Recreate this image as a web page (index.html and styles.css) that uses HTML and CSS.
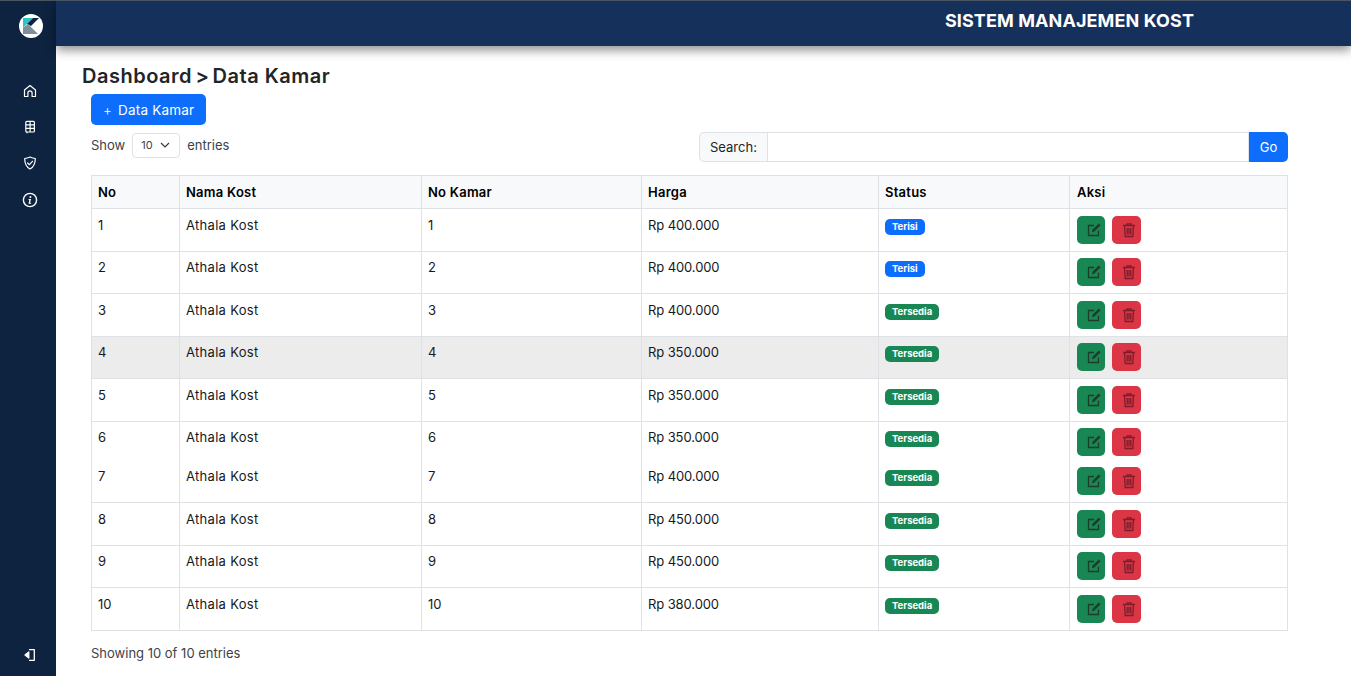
FILE: index.html
```html
<!DOCTYPE html>
<html>
  <head>
    <meta charset="utf-8">
    <title>Data Kamar</title>
    <link rel="stylesheet" href="styles.css">
  </head>
  <body>
    <aside class="sidebar">
      <div class="logo">
        <svg width="26" height="26" viewBox="0 0 26 26">
          <circle cx="13" cy="13" r="12" fill="#fff"/>
          <polygon points="5,5 15,5 5,15" fill="#2cc4c9"/>
          <polygon points="15,5 21,5 13,13 9,11" fill="#0d2340"/>
          <polygon points="5,21 5,15 10,11 20,21" fill="#7d8f9c"/>
        </svg>
      </div>
      <nav class="side-nav">
        <a class="side-link" href="#">
          <svg width="16" height="16" viewBox="0 0 16 16" fill="none" stroke="#fff" stroke-width="1.2" stroke-linejoin="round"><path d="M2.5 7 8 2.5 13.500 7v6.500h-3.400V10a2.100 2.100 0 0 0-4.200 0v3.500H2.500z"/></svg>
        </a>
        <a class="side-link" href="#">
          <svg width="16" height="16" viewBox="0 0 16 16" fill="none" stroke="#fff" stroke-width="1.200"><rect x="3.800" y="2.400" width="8.600" height="10.600" rx="1"/><path d="M8.100 2.400v10.600M3.800 5.900h8.600M3.800 9.400h8.600M5 13v1.200"/></svg>
        </a>
        <a class="side-link" href="#">
          <svg width="16" height="16" viewBox="0 0 16 16" fill="none" stroke="#fff" stroke-width="1.200" stroke-linejoin="round" stroke-linecap="round"><path d="M8 2c2 1 3.600 1.400 5.300 1.500 0 4.600-1.400 8.400-5.300 10.500C4.100 11.900 2.700 8.100 2.700 3.500 4.400 3.400 6 3 8 2z"/><path d="M5.600 8 7.400 9.700 10.500 6.300"/></svg>
        </a>
        <a class="side-link side-link-big" href="#">
          <svg width="16" height="16" viewBox="0 0 16 16"><circle cx="8" cy="8" r="6.600" fill="none" stroke="#fff" stroke-width="1.400"/><circle cx="8.400" cy="4.900" r="1" fill="#fff"/><path d="M6.700 7h2.300l-.9 3.800h1v.9H6.500l.8-3.800h-.8z" fill="#fff"/></svg>
        </a>
      </nav>
      <a class="side-link logout" href="#">
        <svg width="16" height="16" viewBox="0 0 16 16" fill="none" stroke="#fff" stroke-width="1.300" stroke-linejoin="round"><path d="M7 2.700h5.300v10.600H7"/><path d="M6.800 5v6L3 8z" fill="#fff"/></svg>
      </a>
    </aside>

    <div class="main">
      <header class="topbar">
        <h1 class="app-title">SISTEM MANAJEMEN KOST</h1>
      </header>

      <section class="content">
        <h2 class="crumb">Dashboard <span class="crumb-sep">&gt;</span> Data Kamar</h2>
        <div class="panel">
          <a class="btn-add" href="#"><span class="plus">+</span> Data Kamar</a>

          <div class="tools">
            <div class="show">
              <span>Show</span>
              <div class="select">10
                <svg width="12" height="12" viewBox="0 0 12 12" fill="none" stroke="#343a40" stroke-width="1.200"><path d="M2 4l4 4 4-4"/></svg>
              </div>
              <span>entries</span>
            </div>
            <form class="search">
              <label class="search-label">Search:</label>
              <input class="search-input" type="text">
              <button class="search-btn" type="button">Go</button>
            </form>
          </div>

          <table class="rooms">
            <colgroup>
              <col class="c-no"><col class="c-nama"><col class="c-kamar"><col class="c-harga"><col class="c-status"><col class="c-aksi">
            </colgroup>
            <thead>
              <tr><th>No</th><th>Nama Kost</th><th>No Kamar</th><th>Harga</th><th>Status</th><th class="aksi">Aksi</th></tr>
            </thead>
            <tbody id="rows"></tbody>
          </table>

          <p class="info">Showing 10 of 10 entries</p>
        </div>
      </section>
    </div>

    <script>
      var data = [
        [1, "Rp 400.000", "Terisi"],
        [2, "Rp 400.000", "Terisi"],
        [3, "Rp 400.000", "Tersedia"],
        [4, "Rp 350.000", "Tersedia"],
        [5, "Rp 350.000", "Tersedia"],
        [6, "Rp 350.000", "Tersedia"],
        [7, "Rp 400.000", "Tersedia"],
        [8, "Rp 450.000", "Tersedia"],
        [9, "Rp 450.000", "Tersedia"],
        [10, "Rp 380.000", "Tersedia"]
      ];
      var editIcon = '<svg width="16" height="16" viewBox="0 0 16 16" fill="none" stroke="#1c3d2c" stroke-width="1.300"><path d="M12.500 8.500V13.500H2.500V3.500H8"/><path d="M6 10.200l.5-2.400L12.800 1.500l1.800 1.800L8.400 9.600z" fill="#1c3d2c" stroke="none"/></svg>';
      var trashIcon = '<svg width="16" height="16" viewBox="0 0 16 16" fill="none" stroke="#7a1f2b" stroke-width="1.300"><path d="M2 3.500h12M6 3.500V1.800h4v1.700M3.500 3.500l.7 11h7.600l.7-11M6.200 6v6.500M8 6v6.500M9.800 6v6.500"/></svg>';
      var html = "";
      data.forEach(function(r) {
        var badge = r[2] == "Terisi" ? "badge-blue" : "badge-green";
        var cls = r[0] == 4 ? ' class="hover"' : (r[0] == 6 ? ' class="short"' : "");
        html += "<tr" + cls + "><td>" + r[0] + '</td><td class="name">Athala Kost</td><td>' + r[0] + '</td><td class="price">' + r[1] + "</td>" +
          '<td><span class="badge ' + badge + '">' + r[2] + "</span></td>" +
          '<td class="aksi"><a class="act act-edit" href="#">' + editIcon + '</a><a class="act act-del" href="#">' + trashIcon + "</a></td></tr>";
      });
      document.getElementById("rows").innerHTML = html;
    </script>
  </body>
</html>
```

FILE: styles.css
```css
* {
  box-sizing: border-box;
}
html, body {
  height: 100%;
}
body {
  margin: 0;
  display: flex;
  height: 676px;
  overflow: hidden;
  font-family: Inter, "Open Sans", sans-serif;
  font-size: 13px;
  color: #212529;
  background-color: #fff;
}
a {
  text-decoration: none;
}

.sidebar {
  width: 56px;
  flex: none;
  display: flex;
  flex-direction: column;
  align-items: center;
  padding-left: 4px;
  background-color: #0d2340;
  border-top: 1px solid #4a5561;
}
.logo {
  height: 26px;
  margin: 12px 0 0 2px;
}
.side-nav {
  display: flex;
  flex-direction: column;
  align-items: center;
  gap: 18px;
  margin-top: 43px;
}
.side-link {
  display: flex;
  height: 18px;
  align-items: center;
}
.side-link-big {
  height: 20px;
}
.logout {
  margin-top: auto;
  margin-bottom: 12px;
}

.main {
  flex: 1;
  min-width: 0;
}
.topbar {
  height: 46px;
  display: flex;
  justify-content: flex-end;
  padding: 10px 157px 0 0;
  background-color: #15305b;
  border-top: 1px solid #4a5561;
  box-shadow: 0 4px 10px rgba(0, 0, 0, 0.45);
}
.app-title {
  margin: 0;
  font-size: 18px;
  line-height: 20px;
  font-weight: 700;
  letter-spacing: 0.1px;
  color: #fff;
}

.content {
  padding: 18px 63px 0 26px;
}
.crumb {
  height: 24px;
  margin: 0;
  font-size: 20px;
  line-height: 24px;
  font-weight: 600;
  letter-spacing: 0.5px;
}
.crumb-sep {
  margin: 0 -2.500px 0 -2px;
}
.panel {
  padding: 6px 0 0 9px;
}
.btn-add {
  display: inline-flex;
  align-items: center;
  gap: 6px;
  width: 115px;
  height: 31px;
  padding-left: 12px;
  border-radius: 5px;
  background-color: #0d6efd;
  color: #fff;
  font-size: 13.500px;
  letter-spacing: 0.2px;
}
.plus {
  font-weight: 300;
}

.tools {
  display: flex;
  justify-content: space-between;
  align-items: flex-start;
  margin-top: 7px;
}
.show {
  display: flex;
  align-items: center;
  gap: 7px;
  height: 26px;
  padding-bottom: 1px;
  color: #3d4349;
}
.select {
  display: flex;
  align-items: center;
  justify-content: space-between;
  width: 48px;
  height: 25px;
  margin-top: 1px;
  padding: 0 8px;
  border: 1px solid #dee2e6;
  border-radius: 4px;
  font-size: 11px;
}
.search {
  display: flex;
  width: 589px;
  height: 30px;
  margin: 0;
}
.search-label {
  display: flex;
  align-items: center;
  padding: 0 10px 1px;
  border: 1px solid #dee2e6;
  border-radius: 5px 0 0 5px;
  background-color: #f8f9fa;
}
.search-input {
  flex: 1;
  min-width: 0;
  margin-left: -1px;
  border: 1px solid #dee2e6;
}
.search-btn {
  width: 39px;
  border: none;
  border-radius: 0 5px 5px 0;
  background-color: #0d6efd;
  color: #fff;
  font-family: inherit;
  font-size: 13px;
}

.rooms {
  width: 1196px;
  margin-top: 13px;
  table-layout: fixed;
  border-collapse: collapse;
}
.c-no { width: 88px; }
.c-nama { width: 242px; }
.c-kamar { width: 220px; }
.c-harga { width: 237px; }
.c-status { width: 191px; }
.c-aksi { width: 218px; }

.rooms th, .rooms td {
  border: 1px solid #dee2e6;
  padding: 0 6px;
  text-align: left;
  vertical-align: top;
}
.rooms th {
  height: 33px;
  vertical-align: middle;
  background-color: #f8f9fa;
  color: #000;
  font-weight: 600;
  letter-spacing: 0.25px;
}
.rooms td {
  height: 42.500px;
  padding-top: 7.600px;
  color: #16191c;
}
.rooms td.name {
  letter-spacing: 0.3px;
}
.rooms td.price {
  letter-spacing: -0.1px;
}
.rooms tr.hover td {
  background-color: #ececec;
}
.rooms tr.short td {
  height: 39px;
  border-bottom: none;
}
.rooms tr.short + tr td {
  border-top: none;
  padding-top: 8px;
}
.rooms .aksi,
.rooms tr.short + tr td.aksi {
  padding-left: 7px;
}
.rooms td.aksi {
  padding-top: 6.600px;
}
.rooms tr.short + tr td.aksi {
  padding-top: 7px;
}

.badge {
  display: inline-block;
  padding: 0 7px;
  border-radius: 5px;
  color: #fff;
  font-size: 9.500px;
  line-height: 16px;
  font-weight: 700;
}
.badge-blue { background-color: #0d6efd; }
.badge-green { background-color: #198754; }

.act {
  display: inline-flex;
  align-items: center;
  justify-content: center;
  height: 28px;
  padding-left: 5px;
  border-radius: 5px;
  margin-right: 7px;
}
.act-edit {
  width: 28px;
  background-color: #198754;
}
.act-del {
  width: 29px;
  background-color: #dc3545;
}

.info {
  margin: 14px 0 0;
  color: #3d4349;
}
```
